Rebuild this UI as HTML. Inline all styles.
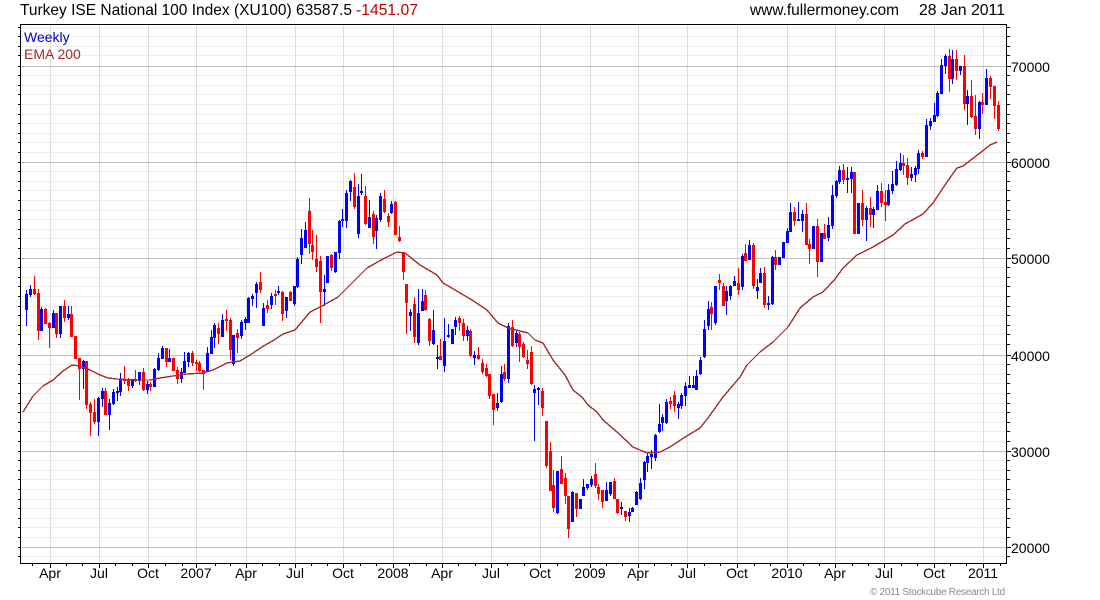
<!DOCTYPE html>
<html><head><meta charset="utf-8"><title>Turkey ISE National 100 Index</title>
<style>
html,body{margin:0;padding:0;background:#fff}
svg{display:block}
text{font-family:"Liberation Sans",Arial,sans-serif}
</style></head><body>
<svg width="1100" height="600" viewBox="0 0 1100 600" xmlns="http://www.w3.org/2000/svg">
<rect width="1100" height="600" fill="#fff"/>
<g shape-rendering="crispEdges" fill="none">
<path stroke="#eeeeee" d="M21 27.5H1006M21 36.5H1006M21 46.5H1006M21 55.5H1006M21 75.5H1006M21 85.5H1006M21 94.5H1006M21 104.5H1006M21 114.5H1006M21 123.5H1006M21 133.5H1006M21 142.5H1006M21 152.5H1006M21 171.5H1006M21 181.5H1006M21 190.5H1006M21 200.5H1006M21 210.5H1006M21 219.5H1006M21 229.5H1006M21 238.5H1006M21 248.5H1006M21 267.5H1006M21 277.5H1006M21 286.5H1006M21 296.5H1006M21 306.5H1006M21 315.5H1006M21 325.5H1006M21 334.5H1006M21 344.5H1006M21 364.5H1006M21 374.5H1006M21 383.5H1006M21 393.5H1006M21 403.5H1006M21 412.5H1006M21 422.5H1006M21 431.5H1006M21 441.5H1006M21 460.5H1006M21 470.5H1006M21 479.5H1006M21 489.5H1006M21 499.5H1006M21 508.5H1006M21 518.5H1006M21 527.5H1006M21 537.5H1006M21 556.5H1006"/>
<path stroke="#dddddd" d="M50.5 25V563M99.5 25V563M148.5 25V563M196.5 25V563M246.5 25V563M295.5 25V563M343.5 25V563M393.5 25V563M442.5 25V563M491.5 25V563M540.5 25V563M590.5 25V563M638.5 25V563M687.5 25V563M737.5 25V563M787.5 25V563M835.5 25V563M884.5 25V563M934.5 25V563M983.5 25V563"/>
<path stroke="#c0c0c0" d="M21 66.5H1006M21 162.5H1006M21 258.5H1006M21 355.5H1006M21 451.5H1006M21 547.5H1006"/>
</g>
<g transform="translate(.5 0)" shape-rendering="crispEdges" fill="none">
<path stroke="#0000ff" stroke-width="1" d="M26 290V326M30 285V297M41 307V331M53 310V328M60 306V338M68 306V320M83 360V389M98 397V436M102 388V407M109 399V430M113 389V405M117 387V401M120 373V396M132 379V388M139 372V385M147 381V394M154 368V387M158 353V371M162 346V359M169 349V362M181 368V383M184 352V373M188 352V367M207 347V372M211 330V354M214 323V348M222 314V337M233 335V366M241 320V339M245 317V330M248 297V323M252 294V306M256 282V308M263 303V326M271 293V309M278 286V295M286 297V318M294 286V306M297 257V288M301 229V264M305 222V248M324 275V306M327 256V283M335 252V273M339 220V259M342 209V227M346 190V228M350 180V201M358 184V238M361 174V195M369 200V228M376 215V249M380 193V222M391 201V214M410 309V331M418 289V345M422 289V311M433 310V345M437 345V369M444 318V372M448 324V338M452 329V344M455 317V335M467 326V341M474 351V365M497 393V411M501 366V403M508 323V383M516 331V347M534 385V441M538 387V405M557 471V514M572 491V522M580 499V509M583 479V496M587 484V490M591 476V487M606 482V501M610 482V496M621 502V515M629 508V522M632 507V512M636 491V505M640 478V500M644 461V489M647 453V472M651 450V469M655 434V461M659 404V433M662 414V431M666 399V424M678 402V419M681 393V409M685 382V406M689 376V388M693 376V388M696 370V390M700 357V375M704 320V358M708 301V330M715 286V325M726 286V315M730 285V300M734 276V286M742 254V290M749 240V260M757 279V299M760 268V283M768 296V310M772 256V305M779 257V265M783 242V258M787 228V243M790 203V232M798 202V221M802 210V232M813 226V249M821 233V262M828 217V241M832 185V229M836 180V198M839 166V184M847 167V193M851 167V193M858 203V234M866 206V241M873 207V228M877 185V210M888 184V206M892 171V194M896 161V186M900 153V171M911 167V181M915 166V182M918 150V174M926 119V157M930 118V130M934 103V122M937 91V117M941 59V94M945 54V74M952 50V84M960 66V75M967 90V125M979 101V139M986 69V105"/>
<path stroke="#ff0000" stroke-width="1" d="M34 276V295M38 289V340M45 308V324M49 322V348M56 313V338M64 300V322M71 306V337M75 336V359M79 358V400M86 361V409M90 402V436M94 399V424M105 388V415M124 366V384M128 378V391M135 370V382M143 368V391M150 382V391M166 348V367M173 358V371M177 367V384M192 351V366M196 360V371M199 361V372M203 370V390M218 323V344M226 310V331M230 318V360M237 329V353M260 272V293M267 300V313M275 290V305M282 291V321M290 291V301M309 198V254M312 230V260M316 235V272M320 256V323M331 254V271M354 173V209M365 186V225M373 211V244M384 190V213M388 213V227M395 201V235M399 226V242M403 252V280M406 284V334M414 297V343M425 290V311M429 318V346M440 339V360M459 316V331M463 319V341M470 329V357M478 347V360M482 359V374M486 364V377M489 374V399M493 394V425M504 364V381M512 320V347M519 332V362M523 342V358M527 350V369M531 346V385M542 388V416M546 421V468M550 442V491M553 470V512M561 456V484M565 473V504M568 496V538M576 493V517M595 463V488M598 484V500M602 490V508M614 478V499M617 499V514M625 511V521M670 397V409M674 391V412M711 302V330M719 274V290M723 283V306M738 268V295M745 244V261M753 243V289M764 267V308M775 250V270M794 207V226M806 203V245M809 239V264M817 219V277M824 224V239M843 164V184M854 172V234M862 190V226M870 197V227M881 183V207M885 190V221M903 155V175M907 158V185M922 151V159M949 49V92M956 50V80M964 55V110M971 80V118M975 95V135M982 93V114M990 76V99M994 86V119M998 101V131"/>
<path stroke="#0000ff" stroke-width="3" d="M26 294V310M30 289V295M41 309V331M53 313V328M60 306V334M68 314V318M83 361V369M98 398V422M102 391V399M109 403V415M113 392V404M117 391V393M120 380V392M132 379V386M139 372V381M147 384V390M154 369V387M158 358V370M162 348V359M169 358V362M181 372V379M184 361V373M188 353V362M207 353V372M211 337V354M214 325V338M222 320V337M233 335V364M241 322V336M245 319V323M248 298V323M252 296V299M256 284V293M263 308V326M271 296V305M278 291V293M286 297V311M294 286V304M297 259V287M301 238V255M305 230V248M324 289V292M327 256V283M335 252V272M339 221V253M342 219V221M346 193V221M350 181V192M358 196V234M361 191V193M369 217V228M376 218V231M380 196V220M391 204V213M410 312V316M418 313V343M422 301V311M433 330V344M437 357V359M444 341V366M448 335V337M452 329V344M455 320V327M467 330V336M474 355V358M497 403V408M501 374V402M508 326V379M516 333V343M534 389V393M538 388V390M557 471V513M572 492V522M580 499V509M583 487V496M587 484V488M591 479V485M606 490V501M610 482V494M621 507V509M629 512V516M632 508V512M636 492V505M640 483V499M644 462V480M647 456V463M651 454V457M655 435V458M659 424V432M662 417V423M666 402V423M678 404V408M681 395V406M685 386V396M689 385V388M693 385V388M696 376V390M700 360V374M704 329V357M708 309V326M715 286V323M726 291V301M730 286V296M734 281V286M742 256V287M749 245V260M757 287V291M760 273V283M768 303V305M772 257V304M779 257V265M783 242V258M787 231V243M790 212V232M798 219V221M802 214V221M813 226V249M821 233V262M828 225V238M832 195V226M836 181V196M839 170V182M847 178V180M851 172V179M858 203V234M866 208V220M873 209V215M877 191V210M888 190V205M892 184V191M896 169V185M900 163V170M911 174V178M915 168V175M918 153V169M926 125V157M930 121V126M934 115V122M937 93V116M941 65V94M945 56V66M952 59V79M960 66V71M967 96V104M979 102V129M986 78V105"/>
<path stroke="#ff0000" stroke-width="3" d="M34 289V294M38 293V331M45 309V324M49 323V328M56 313V334M64 306V318M71 314V337M75 336V359M79 358V369M86 361V405M90 404V413M94 412V422M105 391V415M124 380V381M128 380V386M135 379V381M143 372V390M150 384V387M166 348V362M173 358V371M177 370V379M192 353V363M196 362V364M199 363V371M203 370V374M218 328V334M226 319V321M230 320V350M237 333V338M260 282V290M267 305V309M275 294V296M282 292V314M290 292V301M309 211V244M312 245V252M316 259V267M320 261V292M331 255V268M354 187V207M365 196V224M373 214V237M384 199V212M388 216V222M395 202V235M399 237V241M403 253V272M406 284V303M414 304V337M425 295V310M429 319V341M440 356V360M459 318V323M463 323V336M470 331V356M478 355V359M482 363V372M486 368V376M489 374V396M493 394V410M504 372V379M512 327V346M519 334V347M523 344V357M527 360V364M531 352V384M542 391V408M546 421V466M550 451V491M553 485V508M561 469V484M565 478V496M568 496V529M576 493V509M595 474V486M598 487V494M602 490V502M614 481V499M617 499V513M625 511V517M670 401V404M674 395V406M711 307V314M719 280V283M723 286V306M738 283V290M745 253V261M753 245V286M764 273V305M775 257V265M794 212V221M806 214V245M809 244V249M817 226V262M824 233V239M843 170V180M854 172V234M862 203V220M870 208V215M881 191V203M885 202V205M903 163V166M907 165V178M922 153V157M949 56V79M956 59V71M964 66V104M971 96V117M975 116V129M982 102V105M990 78V87M994 86V106M998 105V129"/>
</g>
<polyline fill="none" stroke="#a52a2a" stroke-width="1.4" shape-rendering="crispEdges" points="23,412 33,396 43,386 53,380 63,371 72,365 80,366 90,370 100,375 108,378 117,379 133,380 150,380 160,378 173,376 187,374 203,373 213,370 227,363 240,361 250,355 262,347 274,340 283,334 295,330 310,312 322,306 338,297 367,268 383,259 397,252 405,253 420,265 437,275 443,283 450,287 472,300 487,310 498,323 508,328 528,333 535,340 543,343 553,360 565,375 573,390 582,397 588,405 597,412 603,420 617,432 633,447 647,453 660,452 670,447 682,439 700,428 708,418 723,397 740,377 747,365 760,352 773,342 788,327 800,308 813,297 823,292 835,279 843,268 857,255 873,247 893,235 905,224 923,214 933,203 947,182 957,168 963,166 980,153 990,145 997,142"/>
<g shape-rendering="crispEdges" fill="none" stroke="#000">
<path d="M20 24.5H1007M20.5 24V564M1006.5 24V564M20 563.5H1007"/>
<path d="M18 27.5H20M18 36.5H20M18 46.5H20M18 55.5H20M18 66.5H20M18 75.5H20M18 85.5H20M18 94.5H20M18 104.5H20M18 114.5H20M18 123.5H20M18 133.5H20M18 142.5H20M18 152.5H20M18 162.5H20M18 171.5H20M18 181.5H20M18 190.5H20M18 200.5H20M18 210.5H20M18 219.5H20M18 229.5H20M18 238.5H20M18 248.5H20M18 258.5H20M18 267.5H20M18 277.5H20M18 286.5H20M18 296.5H20M18 306.5H20M18 315.5H20M18 325.5H20M18 334.5H20M18 344.5H20M18 355.5H20M18 364.5H20M18 374.5H20M18 383.5H20M18 393.5H20M18 403.5H20M18 412.5H20M18 422.5H20M18 431.5H20M18 441.5H20M18 451.5H20M18 460.5H20M18 470.5H20M18 479.5H20M18 489.5H20M18 499.5H20M18 508.5H20M18 518.5H20M18 527.5H20M18 537.5H20M18 547.5H20M18 556.5H20"/>
<path d="M1007 27.5H1010M1007 36.5H1010M1007 46.5H1010M1007 55.5H1010M1007 66.5H1011M1007 75.5H1010M1007 85.5H1010M1007 94.5H1010M1007 104.5H1010M1007 114.5H1010M1007 123.5H1010M1007 133.5H1010M1007 142.5H1010M1007 152.5H1010M1007 162.5H1011M1007 171.5H1010M1007 181.5H1010M1007 190.5H1010M1007 200.5H1010M1007 210.5H1010M1007 219.5H1010M1007 229.5H1010M1007 238.5H1010M1007 248.5H1010M1007 258.5H1011M1007 267.5H1010M1007 277.5H1010M1007 286.5H1010M1007 296.5H1010M1007 306.5H1010M1007 315.5H1010M1007 325.5H1010M1007 334.5H1010M1007 344.5H1010M1007 355.5H1011M1007 364.5H1010M1007 374.5H1010M1007 383.5H1010M1007 393.5H1010M1007 403.5H1010M1007 412.5H1010M1007 422.5H1010M1007 431.5H1010M1007 441.5H1010M1007 451.5H1011M1007 460.5H1010M1007 470.5H1010M1007 479.5H1010M1007 489.5H1010M1007 499.5H1010M1007 508.5H1010M1007 518.5H1010M1007 527.5H1010M1007 537.5H1010M1007 547.5H1011M1007 556.5H1010"/>
<path d="M50.5 564V568M99.5 564V568M148.5 564V568M196.5 564V568M246.5 564V568M295.5 564V568M343.5 564V568M393.5 564V568M442.5 564V568M491.5 564V568M540.5 564V568M590.5 564V568M638.5 564V568M687.5 564V568M737.5 564V568M787.5 564V568M835.5 564V568M884.5 564V568M934.5 564V568M983.5 564V568M32.5 564V566M66.5 564V566M82.5 564V566M115.5 564V566M132.5 564V566M165.5 564V566M182.5 564V566M215.5 564V566M230.5 564V566M262.5 564V566M279.5 564V566M311.5 564V566M327.5 564V566M360.5 564V566M376.5 564V566M409.5 564V566M426.5 564V566M458.5 564V566M475.5 564V566M507.5 564V566M524.5 564V566M557.5 564V566M573.5 564V566M606.5 564V566M622.5 564V566M654.5 564V566M671.5 564V566M704.5 564V566M720.5 564V566M754.5 564V566M770.5 564V566M803.5 564V566M819.5 564V566M852.5 564V566M868.5 564V566M901.5 564V566M917.5 564V566M950.5 564V566M966.5 564V566M1000.5 564V566"/>
</g>
<text x="20" y="15" font-size="16" fill="#000" textLength="332" lengthAdjust="spacingAndGlyphs">Turkey ISE National 100 Index (XU100) 63587.5</text>
<text x="356" y="15" font-size="16" fill="#c00000" textLength="62" lengthAdjust="spacingAndGlyphs">-1451.07</text>
<text x="750" y="15" font-size="16" fill="#000" textLength="149" lengthAdjust="spacingAndGlyphs">www.fullermoney.com</text>
<text x="919" y="15" font-size="16" fill="#000" textLength="86" lengthAdjust="spacingAndGlyphs">28 Jan 2011</text>
<text x="24" y="42" font-size="14" fill="#0000c8">Weekly</text>
<text x="24" y="59" font-size="14" fill="#a52a2a">EMA 200</text>
<g font-size="14" fill="#000">
<text x="1011" y="72">70000</text>
<text x="1011" y="168">60000</text>
<text x="1011" y="264">50000</text>
<text x="1011" y="361">40000</text>
<text x="1011" y="457">30000</text>
<text x="1011" y="553">20000</text>
</g>
<g font-size="14" fill="#000" text-anchor="middle">
<text x="50" y="578">Apr</text><text x="99" y="578">Jul</text><text x="148" y="578">Oct</text><text x="196" y="578">2007</text>
<text x="246" y="578">Apr</text><text x="295" y="578">Jul</text><text x="343" y="578">Oct</text><text x="393" y="578">2008</text>
<text x="442" y="578">Apr</text><text x="491" y="578">Jul</text><text x="540" y="578">Oct</text><text x="590" y="578">2009</text>
<text x="638" y="578">Apr</text><text x="687" y="578">Jul</text><text x="737" y="578">Oct</text><text x="787" y="578">2010</text>
<text x="835" y="578">Apr</text><text x="884" y="578">Jul</text><text x="934" y="578">Oct</text><text x="983" y="578">2011</text>
</g>
<text x="870" y="595" font-size="10" fill="#8c8c8c" textLength="135" lengthAdjust="spacing">© 2011 Stockcube Research Ltd</text>
</svg>
</body></html>
